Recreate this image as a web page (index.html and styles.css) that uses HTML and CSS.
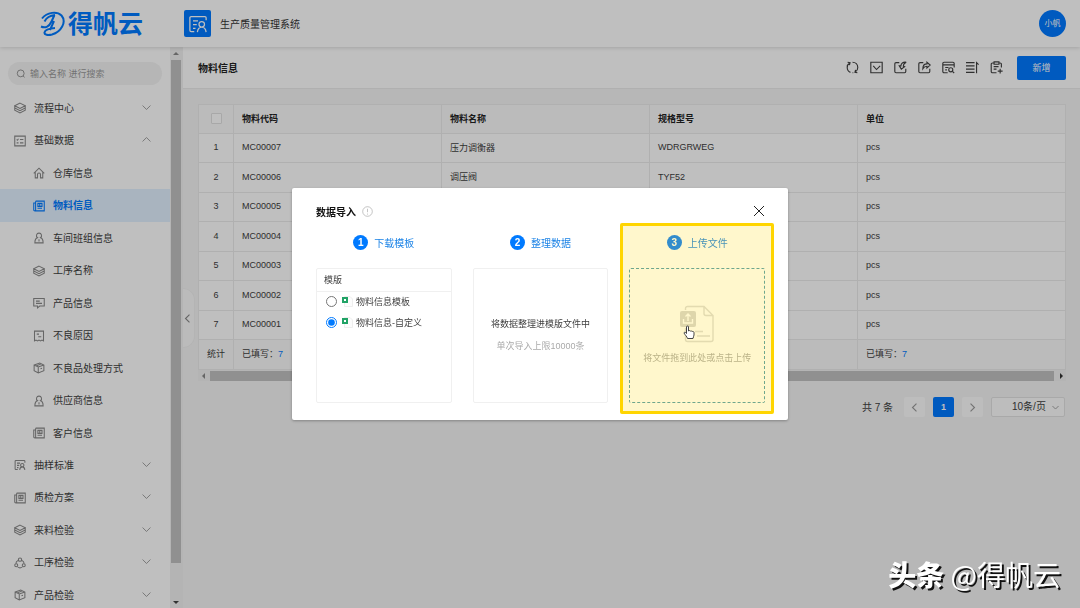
FILE: index.html
```html
<!DOCTYPE html>
<html lang="zh-CN">
<head>
    <meta charset="UTF-8">
    <meta name="viewport" content="width=device-width, initial-scale=1.0">
    <title>生产质量管理系统</title>
    <link rel="stylesheet" href="styles.css">
</head>
<body>
<!-- Icon set -->
<svg class="sprite" aria-hidden="true">
    <symbol id="i-layers" viewBox="0 0 16 16"><path d="M8 1.500 15 5 8 8.500 1 5zM1 5v3l7 3.500L15 8V5M1 8v3l7 3.500 7-3.500V8"/></symbol>
    <symbol id="i-list" viewBox="0 0 16 16"><path d="M1 1.500h14v13H1zM3.500 6l1 1L6 5M8 6h4.500M3.500 10.500H6M8 10.500h4.500"/></symbol>
    <symbol id="i-home" viewBox="0 0 16 16"><path d="M1 8.500 8 1.500l7 7M3 7v7.500h3V10a2 2 0 0 1 4 0v4.500h3V7"/></symbol>
    <symbol id="i-news" viewBox="0 0 16 16"><path d="M3.500 1.500H15v13H2.500A1.500 1.500 0 0 1 1 13V4h2.500M3.500 1.500v13M6.500 4.500H12v4H6.500zM9 4.500v4M6 11h6"/></symbol>
    <symbol id="i-user" viewBox="0 0 16 16"><path d="M8 1.500a3.300 3.300 0 0 1 2 6c2.500.8 3.500 3 3.500 7h-11c0-4 1-6.200 3.500-7a3.300 3.300 0 0 1 2-6zM8 9.500v3"/></symbol>
    <symbol id="i-chat" viewBox="0 0 16 16"><path d="M1 2h14v10H9l-3 2.500V12H1zM4 5.500h5M4 8.500h8"/></symbol>
    <symbol id="i-bill" viewBox="0 0 16 16"><path d="M2 1.500h12v13l-2-1-2 1-2-1-2 1-2-1-2 1zM5 5.500h3M7 9h4"/></symbol>
    <symbol id="i-box" viewBox="0 0 16 16"><path d="M1.500 4 9 1.500l5.500 2.500v7.500L7 14.500l-5.500-3zM1.500 4 7 6.500 14.500 4M7 6.500v8M4 5.200 11 2.500M10 9l2-.8"/></symbol>
    <symbol id="i-cert" viewBox="0 0 16 16"><path d="M5 14H2.500a1 1 0 0 1-1-1V3a1 1 0 0 1 1-1h11a1 1 0 0 1 1 1v2M4 5.500h4M4 8.500h3M4 11.500h2M11 6a2.200 2.200 0 1 1 0 4.400A2.200 2.200 0 0 1 11 6zM7.500 14.500c.4-2.700 1.500-4 3.500-4s3.100 1.300 3.500 4"/></symbol>
    <symbol id="i-cycle" viewBox="0 0 16 16"><path d="M5.800 3.500a2.200 2.200 0 1 1 4.400 0 2.200 2.200 0 0 1-4.400 0zM5.500 4.500C3.500 5.500 2.500 7 2.500 9M10.500 4.500c2 1 3 2.500 3 4.500M1 11a2 2 0 1 0 4 0 2 2 0 0 0-4 0zM11 11a2 2 0 1 0 4 0 2 2 0 0 0-4 0zM5 13.500c2 1.300 4 1.300 6 0"/></symbol>
    <symbol id="i-down" viewBox="0 0 16 16"><path d="m1 4.500 7 7 7-7"/></symbol>
    <symbol id="i-up" viewBox="0 0 16 16"><path d="m1 11.500 7-7 7 7"/></symbol>
    <symbol id="i-left" viewBox="0 0 16 16"><path d="m11.500 1-7 7 7 7"/></symbol>
    <symbol id="i-right" viewBox="0 0 16 16"><path d="m4.500 1 7 7-7 7"/></symbol>
    <symbol id="i-search" viewBox="0 0 16 16"><circle cx="7.500" cy="7" r="5.500"/><path d="m11.500 11 2 2.500"/></symbol>
    <symbol id="i-refresh" viewBox="0 0 16 16"><path d="M5.500 14C3 13 1.500 10.800 1.500 8c0-2.500 1.200-4.500 3-5.500M2 1.500l3 .7-.8 3M8 1.500c3.800 0 6.500 2.700 6.500 6.500 0 2.500-1.200 4.500-3 5.500M14 14.500l-3-.7.8-3M8 14.500h1"/></symbol>
    <symbol id="i-check" viewBox="0 0 16 16"><path d="M1 1.500h14v13H1zM4 6l4 4.500L12.500 6"/></symbol>
    <symbol id="i-import" viewBox="0 0 16 16"><path d="M6.500 2H2.500A1.500 1.500 0 0 0 1 3.500V13a1.500 1.500 0 0 0 1.500 1.500H13a1.500 1.500 0 0 0 1.500-1.500V9.500M15 1.500c-4-.5-6.500 1.500-6.500 4.500H6.500L9 10l4-3-1.500-.5c0-2 1-4 3.500-5z"/></symbol>
    <symbol id="i-export" viewBox="0 0 16 16"><path d="M6.500 2H2.500A1.500 1.500 0 0 0 1 3.500V13a1.500 1.500 0 0 0 1.500 1.500H13a1.500 1.500 0 0 0 1.500-1.500V9.500M6 9.500C6 5.500 8 3.500 11 3.500v-2L15 5l-4 3.500v-2C9 6.500 7.500 7 6 9.500z"/></symbol>
    <symbol id="i-query" viewBox="0 0 16 16"><path d="M7 14.500H2.500A1.500 1.500 0 0 1 1 13V3a1.500 1.500 0 0 1 1.500-1.500h11A1.500 1.500 0 0 1 15 3v5M1 4.800h14M4 8h4M4 11h2"/><circle cx="10.800" cy="10.800" r="2.500"/><path d="m12.800 12.800 2.200 2"/></symbol>
    <symbol id="i-sort" viewBox="0 0 16 16"><path d="M0 2h10.500M0 6h10.500M0 10h10.500M0 14h10.500M13 15V2l2.500 2.500"/></symbol>
    <symbol id="i-paste" viewBox="0 0 16 16"><path d="M8 14.500H3A1.500 1.500 0 0 1 1.500 13V4A1.500 1.500 0 0 1 3 2.500h2M11 2.500h1.500A1.500 1.500 0 0 1 14 4v4M5 1h6v3H5zM4.500 7h6M4.500 10H8M9.500 12.500h6M12.500 9.500v6"/></symbol>
</svg>

<div class="app">
    <header class="topbar">
        <a class="logo" href="#">
            <svg class="logo-mark" viewBox="0 0 26 26" aria-hidden="true"><path d="M2 7.500C7 1 17 0 21.500 4.500 27 11 21 21 12 23.500c-4 1-8 .5-7.500-2C5 19 9 17.500 15 17M1 15.500c4 2 8 .5 10.500-5l3-6.500M4.500 10.500c2-4 5.500-6 10.500-6.500M14 10l-4 9"/></svg>
            <span>得帆云</span>
        </a>
        <span class="app-icon"><svg class="icon"><use href="#i-cert"/></svg></span>
        <span class="app-name">生产质量管理系统</span>
        <button class="avatar" type="button">小帆</button>
    </header>

    <div class="body">
        <aside class="sidebar">
            <div class="side-main">
                <label class="search">
                    <svg class="icon"><use href="#i-search"/></svg>
                    <input type="text" placeholder="输入名称 进行搜索" aria-label="搜索">
                </label>
                <ul class="menu">
                    <li><a href="#"><svg class="icon"><use href="#i-layers"/></svg>流程中心<svg class="icon arrow"><use href="#i-down"/></svg></a></li>
                    <li>
                        <a href="#"><svg class="icon"><use href="#i-list"/></svg>基础数据<svg class="icon arrow"><use href="#i-up"/></svg></a>
                        <ul class="submenu">
                            <li><a href="#"><svg class="icon"><use href="#i-home"/></svg>仓库信息</a></li>
                            <li><a class="active" href="#"><svg class="icon"><use href="#i-news"/></svg>物料信息</a></li>
                            <li><a href="#"><svg class="icon"><use href="#i-user"/></svg>车间班组信息</a></li>
                            <li><a href="#"><svg class="icon"><use href="#i-layers"/></svg>工序名称</a></li>
                            <li><a href="#"><svg class="icon"><use href="#i-chat"/></svg>产品信息</a></li>
                            <li><a href="#"><svg class="icon"><use href="#i-bill"/></svg>不良原因</a></li>
                            <li><a href="#"><svg class="icon"><use href="#i-box"/></svg>不良品处理方式</a></li>
                            <li><a href="#"><svg class="icon"><use href="#i-user"/></svg>供应商信息</a></li>
                            <li><a href="#"><svg class="icon"><use href="#i-news"/></svg>客户信息</a></li>
                        </ul>
                    </li>
                    <li><a href="#"><svg class="icon"><use href="#i-cert"/></svg>抽样标准<svg class="icon arrow"><use href="#i-down"/></svg></a></li>
                    <li><a href="#"><svg class="icon"><use href="#i-news"/></svg>质检方案<svg class="icon arrow"><use href="#i-down"/></svg></a></li>
                    <li><a href="#"><svg class="icon"><use href="#i-layers"/></svg>来料检验<svg class="icon arrow"><use href="#i-down"/></svg></a></li>
                    <li><a href="#"><svg class="icon"><use href="#i-cycle"/></svg>工序检验<svg class="icon arrow"><use href="#i-down"/></svg></a></li>
                    <li><a href="#"><svg class="icon"><use href="#i-box"/></svg>产品检验<svg class="icon arrow"><use href="#i-down"/></svg></a></li>
                </ul>
            </div>
            <div class="vscroll">
                <span class="tri tri-up"></span>
                <div class="vthumb"></div>
                <span class="tri tri-down"></span>
            </div>
        </aside>

        <main class="content">
            <button class="collapse" type="button" aria-label="收起"><svg class="icon"><use href="#i-left"/></svg></button>
            <div class="page-head">
                <h1>物料信息</h1>
                <div class="tools">
                    <button type="button" aria-label="刷新"><svg class="icon"><use href="#i-refresh"/></svg></button>
                    <button type="button" aria-label="选择"><svg class="icon"><use href="#i-check"/></svg></button>
                    <button type="button" aria-label="导入"><svg class="icon"><use href="#i-import"/></svg></button>
                    <button type="button" aria-label="导出"><svg class="icon"><use href="#i-export"/></svg></button>
                    <button type="button" aria-label="查询"><svg class="icon"><use href="#i-query"/></svg></button>
                    <button type="button" aria-label="排序"><svg class="icon"><use href="#i-sort"/></svg></button>
                    <button type="button" aria-label="粘贴"><svg class="icon"><use href="#i-paste"/></svg></button>
                </div>
                <button class="btn-add" type="button">新增</button>
            </div>

            <div class="table-wrap">
                <table class="grid">
                    <thead>
                        <tr><th class="num"><input type="checkbox" aria-label="全选"></th><th>物料代码</th><th>物料名称</th><th>规格型号</th><th>单位</th></tr>
                    </thead>
                    <tbody>
                        <tr><td class="num">1</td><td>MC00007</td><td>压力调衡器</td><td>WDRGRWEG</td><td>pcs</td></tr>
                        <tr><td class="num">2</td><td>MC00006</td><td>调压阀</td><td>TYF52</td><td>pcs</td></tr>
                        <tr><td class="num">3</td><td>MC00005</td><td></td><td></td><td>pcs</td></tr>
                        <tr><td class="num">4</td><td>MC00004</td><td></td><td></td><td>pcs</td></tr>
                        <tr><td class="num">5</td><td>MC00003</td><td></td><td></td><td>pcs</td></tr>
                        <tr><td class="num">6</td><td>MC00002</td><td></td><td></td><td>pcs</td></tr>
                        <tr><td class="num">7</td><td>MC00001</td><td></td><td></td><td>pcs</td></tr>
                    </tbody>
                    <tfoot>
                        <tr><td class="num">统计</td><td>已填写：<b>7</b></td><td></td><td></td><td>已填写：<b>7</b></td></tr>
                    </tfoot>
                </table>
                <div class="hscroll">
                    <span class="tri tri-left"></span>
                    <div class="hthumb"></div>
                    <span class="tri tri-right"></span>
                </div>
            </div>

            <div class="pager">
                <span>共 7 条</span>
                <button type="button" aria-label="上一页"><svg class="icon"><use href="#i-left"/></svg></button>
                <button class="current" type="button">1</button>
                <button type="button" aria-label="下一页"><svg class="icon"><use href="#i-right"/></svg></button>
                <label class="page-size">
                    <select aria-label="每页条数"><option>10条/页</option></select>
                    <svg class="icon"><use href="#i-down"/></svg>
                </label>
            </div>
        </main>
    </div>
</div>

<!-- Import dialog -->
<div class="mask">
    <section class="modal" role="dialog" aria-labelledby="modal-title">
        <div class="modal-head">
            <h2 id="modal-title">数据导入</h2>
            <svg class="tip" viewBox="0 0 16 16" aria-hidden="true"><circle cx="8" cy="8" r="7"/><path d="M8 4v5M8 11v1.500"/></svg>
            <button class="close" type="button" aria-label="关闭"><svg viewBox="0 0 12 12"><path d="m1 1 10 10M11 1 1 11"/></svg></button>
        </div>
        <div class="steps">
            <div class="step">
                <h3><span class="step-no">1</span>下载模板</h3>
                <div class="card">
                    <p class="card-title">模版</p>
                    <label class="tpl"><input type="radio" name="tpl"><svg class="file" viewBox="0 0 11 11"><path class="sheet" d="M2.500.5H8L10.500 3v7.500h-8z"/><path class="mark" d="M0 1h6v6H0z"/><path class="cross" d="m2 3 2 2M4 3 2 5"/></svg>物料信息模板</label>
                    <label class="tpl"><input type="radio" name="tpl" checked><svg class="file" viewBox="0 0 11 11"><path class="sheet" d="M2.500.5H8L10.500 3v7.500h-8z"/><path class="mark" d="M0 1h6v6H0z"/><path class="cross" d="m2 3 2 2M4 3 2 5"/></svg>物料信息-自定义</label>
                </div>
            </div>
            <div class="step">
                <h3><span class="step-no">2</span>整理数据</h3>
                <div class="card card-center">
                    <p>将数据整理进模版文件中</p>
                    <p class="muted">单次导入上限10000条</p>
                </div>
            </div>
            <div class="step">
                <h3><span class="step-no">3</span>上传文件</h3>
                <button class="card card-center upload" type="button">
                    <svg class="upload-icon" viewBox="0 0 34 36" aria-hidden="true">
                        <path class="paper" d="M5.500 4V2.500a2 2 0 0 1 2-2H24l9 9v24a2 2 0 0 1-2 2H7.500a2 2 0 0 1-2-2V22M24 .5v7a2 2 0 0 0 2 2h7M15 25.500h8M17 30h13"/>
                        <rect class="tile" y="5" width="16" height="16" rx="2"/>
                        <path class="up" d="M8 15V8M5.500 10.500 8 8l2.500 2.500M3.500 13v4h9v-4"/>
                    </svg>
                    <span>将文件拖到此处或点击上传</span>
                </button>
                <div class="highlight"></div>
                <svg class="hand" viewBox="0 0 12 14" aria-hidden="true"><path d="M3.500 8.500V2a1 1 0 0 1 2 0v4c.5-.7 1.500-.5 1.800.2.600-.6 1.500-.3 1.800.4.800-.5 1.900 0 1.900 1v2.400c0 1.500-1 2-1 3.500H4.500C4 11.500 2 10 1 8c0-1 1.500-1 2.500.5z"/></svg>
            </div>
        </div>
    </section>
</div>

<div class="watermark"><strong>头条</strong> @得帆云</div>
</body>
</html>
```

FILE: styles.css
```css
* {
    box-sizing: border-box;
}
body {
    margin: 0;
    font-family: "Liberation Sans", "Noto Sans CJK SC", sans-serif;
    font-size: 9px;
    color: #404040;
    overflow: hidden;
}
h1, h2, h3, p, ul {
    margin: 0;
    padding: 0;
}
ul {
    list-style: none;
}
a {
    color: inherit;
    text-decoration: none;
}
button, input, select {
    font: inherit;
    color: inherit;
}
button {
    padding: 0;
    border: none;
    background: none;
    cursor: pointer;
}
.sprite {
    display: none;
}
.icon {
    width: 12px;
    height: 12px;
    flex: none;
    fill: none;
    stroke: currentColor;
    stroke-width: 1.4;
}
.app {
    display: flex;
    flex-direction: column;
    height: 100vh;
    background: #f5f5f5;
}

/* top bar */
.topbar {
    display: flex;
    align-items: center;
    flex: none;
    height: 47px;
    padding-right: 14px;
    background: #fff;
    box-shadow: 0 1px 4px rgba(0,0,0,0.15);
    position: relative;
    z-index: 1;
}
.logo {
    display: flex;
    align-items: center;
    gap: 2px;
    width: 184px;
    padding-left: 40px;
    color: #007aff;
    font-size: 25px;
    font-weight: bold;
    line-height: 30px;
}
.logo-mark {
    width: 26px;
    height: 26px;
    fill: none;
    stroke: #007aff;
    stroke-width: 2;
}
.app-icon {
    display: flex;
    align-items: center;
    justify-content: center;
    width: 27px;
    height: 27px;
    border-radius: 2px;
    background: #0078ff;
    color: #fff;
}
.app-icon .icon {
    width: 20px;
    height: 20px;
    stroke-width: 1;
}
.app-name {
    margin-left: 9px;
    font-size: 10px;
    color: #333;
}
.avatar {
    width: 27px;
    height: 27px;
    margin-left: auto;
    padding-bottom: 2px;
    border-radius: 50%;
    background: #0078ff;
    color: #fff;
    font-size: 8px;
}

.body {
    display: flex;
    flex: 1;
    min-height: 0;
}

/* side menu */
.sidebar {
    display: flex;
    flex: none;
    width: 183px;
    background: #fff;
}
.side-main {
    flex: 1;
    overflow: hidden;
    padding-top: 15px;
}
.search {
    display: flex;
    align-items: center;
    gap: 4px;
    height: 23px;
    margin: 0 8px 7px;
    padding: 0 8px;
    border-radius: 12px;
    background: #f3f3f3;
    color: #888;
}
.search .icon {
    width: 10px;
    height: 10px;
}
.search input {
    width: 100%;
    padding: 0;
    border: none;
    outline: none;
    background: none;
}
.search input::placeholder {
    color: #999;
}
.menu a {
    display: flex;
    align-items: center;
    height: 32px;
    padding: 0 19px 2px 14px;
    font-size: 10px;
    color: #404040;
}
.menu .icon {
    margin: 2px 8px 0 0;
    color: #888;
}
.menu .arrow {
    width: 9px;
    height: 9px;
    margin: 0 0 0 auto;
}
.menu li:nth-child(even) > a {
    height: 33px;
}
.menu .submenu a {
    padding-left: 33px;
}
.menu .active {
    background: #e2f0ff;
    color: #007aff;
    font-weight: bold;
}
.menu .active .icon {
    color: #007aff;
}

/* scrollbars */
.vscroll {
    display: flex;
    flex-direction: column;
    align-items: center;
    width: 13px;
    padding: 5px 1px 4px 0;
    background: #f1f1f1;
}
.vthumb {
    flex: 1;
    width: 10px;
    margin: 5px 0 38px;
    background: #c1c1c1;
}
.hscroll {
    display: flex;
    align-items: center;
    height: 11px;
    padding: 0 3px 0 4px;
    background: #f1f1f1;
}
.hthumb {
    flex: 1;
    height: 10px;
    margin: 0 6px 0 5px;
    background: #c1c1c1;
}
.tri {
    flex: none;
    border: 3px solid transparent;
}
.tri-up {
    border-top: none;
    border-bottom-color: #888;
}
.tri-down {
    border-bottom: none;
    border-top-color: #444;
}
.tri-left {
    border-left: none;
    border-right-color: #888;
}
.tri-right {
    border-right: none;
    border-left-color: #333;
}

/* content */
.content {
    flex: 1;
    min-width: 0;
    position: relative;
}
.collapse {
    position: absolute;
    top: 241px;
    left: 0;
    display: flex;
    align-items: center;
    width: 12px;
    height: 60px;
    border: 1px solid #f0f0f0;
    border-left: none;
    border-radius: 0 12px 12px 0;
    background: #fafafa;
    color: #888;
}
.collapse .icon {
    width: 9px;
    height: 9px;
    stroke-width: 2;
}
.page-head {
    display: flex;
    align-items: center;
    height: 42px;
    padding: 0 14px 0 15px;
    background: #fff;
    border-bottom: 1px solid #ebebeb;
}
.page-head h1 {
    margin-right: auto;
    font-size: 10px;
    color: #222;
}
.tools {
    display: flex;
    gap: 11px;
    margin-right: 14px;
}
.tools button {
    display: flex;
}
.tools .icon {
    width: 13px;
    height: 13px;
}
.btn-add {
    width: 49px;
    height: 24px;
    border-radius: 2px;
    background: #0078ff;
    color: #fff;
}
.table-wrap {
    margin: 15px 14px 0 15px;
}
.grid {
    width: 100%;
    table-layout: fixed;
    border-collapse: collapse;
    background: #fff;
}
.grid th, .grid td {
    height: 29px;
    padding: 0 8px 2px;
    border: 1px solid #ebebeb;
    text-align: left;
}
.grid th {
    background: #fafafa;
    color: #222;
}
.grid tbody tr:nth-child(even) td {
    height: 30px;
}
.grid tfoot td {
    height: 30px;
    background: #fafafa;
}
.grid b {
    color: #007aff;
    font-weight: normal;
}
.grid .num {
    width: 35px;
    padding: 0 0 2px;
    text-align: center;
}
.grid input {
    display: block;
    appearance: none;
    width: 11px;
    height: 11px;
    margin: 0 auto;
    border: 1px solid #e0e0e0;
    border-radius: 1px;
    background: #fff;
}
.pager {
    display: flex;
    align-items: center;
    justify-content: flex-end;
    gap: 8px;
    margin: 16px 15px 0;
}
.pager span {
    margin-right: 3px;
    padding-bottom: 2px;
    font-size: 10px;
}
.pager button {
    display: flex;
    align-items: center;
    justify-content: center;
    width: 21px;
    height: 20px;
    border-radius: 2px;
    background: #fcfcfc;
    color: #999;
}
.pager .icon {
    width: 9px;
    height: 9px;
    stroke-width: 2;
}
.pager .current {
    background: #0078ff;
    color: #fff;
    font-weight: bold;
}
.page-size {
    position: relative;
}
.page-size select {
    display: block;
    appearance: none;
    width: 74px;
    height: 20px;
    padding: 0 0 2px 20px;
    border: 1px solid #e2e2e2;
    border-radius: 2px;
    background: #fcfcfc;
    font-size: 10px;
}
.pager .page-size .icon {
    position: absolute;
    top: 7px;
    right: 6px;
    width: 7px;
    height: 7px;
    color: #999;
}

/* dialog */
.mask {
    position: fixed;
    inset: 0;
    z-index: 10;
    display: flex;
    align-items: center;
    justify-content: center;
    background: rgba(0,0,0,0.25);
}
.modal {
    width: 496px;
    padding: 15px 23px 17px 24px;
    border-radius: 2px;
    background: #fff;
    box-shadow: 0 1px 3px rgba(0,0,0,0.3);
}
.modal-head {
    display: flex;
    align-items: center;
    height: 16px;
    margin-bottom: 15px;
}
.modal-head h2 {
    font-size: 10px;
    color: #111;
}
.tip {
    width: 11px;
    height: 11px;
    margin-left: 6px;
    fill: none;
    stroke: #aaa;
}
.close {
    display: flex;
    margin-left: auto;
}
.close svg {
    width: 12px;
    height: 12px;
    stroke: #222;
}
.steps {
    display: grid;
    grid-template-columns: repeat(3, 1fr);
    gap: 21px;
}
.step {
    position: relative;
}
.step h3 {
    display: flex;
    align-items: center;
    justify-content: center;
    gap: 6px;
    height: 16px;
    margin-bottom: 18px;
    font-size: 10px;
    font-weight: normal;
    color: #1a82e6;
}
.step-no {
    width: 15px;
    height: 15px;
    border-radius: 50%;
    background: #007aff;
    color: #fff;
    font-weight: bold;
    line-height: 15px;
    text-align: center;
}
.card {
    width: 100%;
    height: 135px;
    border: 1px solid #f0f0f0;
    border-radius: 2px;
}
.card-title {
    height: 23px;
    padding-left: 7px;
    border-bottom: 1px solid #f0f0f0;
    line-height: 22px;
}
.tpl {
    display: flex;
    align-items: center;
    height: 21px;
    padding: 0 0 2px 9px;
}
.tpl input {
    width: 11px;
    height: 11px;
    margin: 0 5px 0 0;
    accent-color: #007aff;
}
.file {
    width: 11px;
    height: 11px;
    margin-right: 3px;
}
.sheet {
    fill: #fcfcfc;
    stroke: #eee;
}
.mark {
    fill: #21a366;
}
.cross {
    stroke: #fff;
}
.card-center {
    display: flex;
    flex-direction: column;
    align-items: center;
    justify-content: center;
    gap: 9px;
    padding-bottom: 2px;
}
.muted {
    color: #aaa;
}
.upload {
    border: 1px dashed #4a9ab0;
    color: #aaa;
}
.upload-icon {
    width: 34px;
    height: 36px;
    overflow: visible;
}
.paper {
    fill: none;
    stroke: #dcdcdc;
    stroke-width: 1.4;
}
.tile {
    fill: #d6d6d6;
}
.up {
    fill: none;
    stroke: #fff;
    stroke-width: 1.4;
}
.highlight {
    position: absolute;
    inset: -11px -9px;
    border: 3px solid #ffd500;
    border-radius: 2px;
    background: rgba(255,213,0,0.2);
    pointer-events: none;
}
.hand {
    position: absolute;
    top: 91px;
    left: 54px;
    width: 12px;
    height: 14px;
    fill: #fff;
    stroke: #444;
    pointer-events: none;
}

.watermark {
    position: fixed;
    right: 19px;
    bottom: 14px;
    z-index: 20;
    color: #fff;
    font-family: "Noto Sans CJK SC", sans-serif;
    font-size: 28px;
    line-height: 40px;
    text-shadow: 2px 2px 0 #111;
}
.watermark strong {
    font-weight: 900;
}
```
